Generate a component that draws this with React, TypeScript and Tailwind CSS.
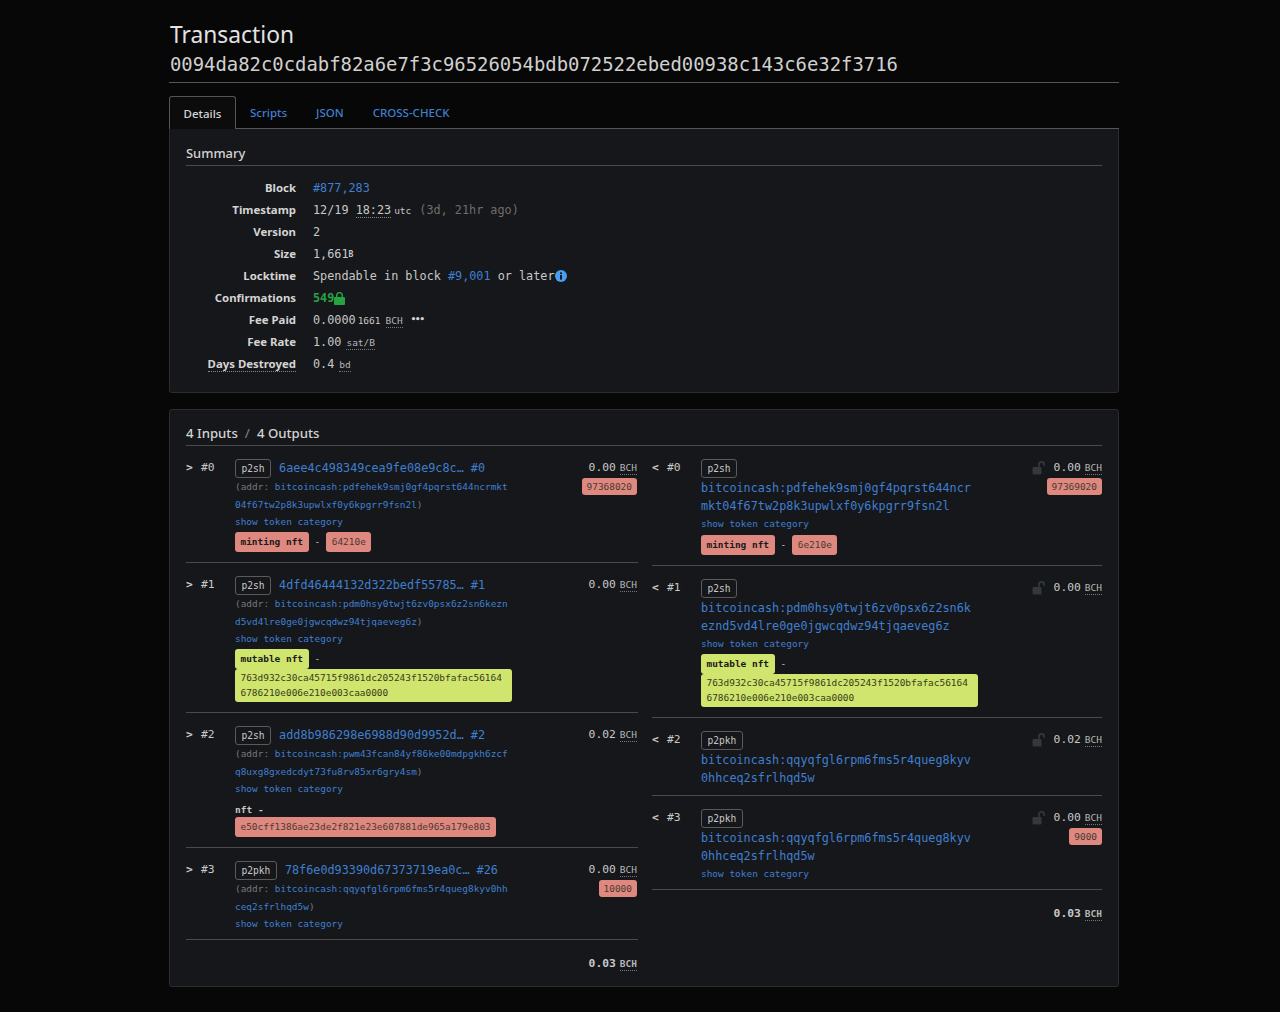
import React from "react";

const mono = "font-['DejaVu_Sans_Mono',monospace]";
const sans = "font-['Noto_Sans',sans-serif]";
const link = "text-[#3f7fd0]";

function Unit({ children, cls = "" }: { children: React.ReactNode; cls?: string }) {
  return <span className={`text-[9.5px] leading-[12px] border-b border-dotted border-[#777] text-[#b5b5b5] ${cls}`}>{children}</span>;
}

function Row({ label, dotted, children }: { label: string; dotted?: boolean; children: React.ReactNode }) {
  return (
    <div className="flex h-[22px] items-center">
      <div className="w-[110px] pb-[2px] text-right text-[11.4px] font-bold text-[#d4d4d4]">
        <span className={dotted ? "border-b border-dotted border-[#888]" : ""}>{label}</span>
      </div>
      <div className={`ml-[17px] flex items-center text-[11.8px] text-[#c8c8c8] ${mono}`}>{children}</div>
    </div>
  );
}

function Amount({ value, bold }: { value: string; bold?: boolean }) {
  return (
    <span className={`flex items-center gap-[4px] text-[11.3px] text-[#c8c8c8] ${mono} ${bold ? "font-bold" : ""}`}>
      {value} <Unit>BCH</Unit>
    </span>
  );
}

function Pill({ children, color, bold }: { children: React.ReactNode; color: "red" | "green"; bold?: boolean }) {
  const c = color === "red" ? "bg-[#de8880]" : "bg-[#cfe56d]";
  return (
    <span className={`block w-fit rounded-[3px] px-[5.5px] text-[9.45px] leading-[20px] ${c} ${bold ? "font-bold text-[#1a1a1a]" : "text-[#4a3a30]"}`}>
      {children}
    </span>
  );
}

function Sats({ children }: { children: React.ReactNode }) {
  return <span className="block w-fit rounded-[3px] bg-[#de8880] px-[5px] text-[9.45px] leading-[17px] text-[#4a3a30]">{children}</span>;
}

function Kind({ children }: { children: string }) {
  return (
    <span className={`block h-[19px] w-fit shrink-0 rounded-[3px] border border-[#5a5a5a] px-[5.5px] text-[9.6px] leading-[17px] text-[#c8c8c8] ${mono}`}>
      {children}
    </span>
  );
}

function LockOpen() {
  return (
    <svg width="14" height="14" viewBox="0 0 14 14" className="mb-[1px] mr-[8px]">
      <rect x="0.5" y="6" width="9" height="7.5" rx="1" fill="#34373b" />
      <path d="M7 6V3.4a2.5 2.5 0 0 1 5 0V5" fill="none" stroke="#34373b" strokeWidth="1.6" />
    </svg>
  );
}

type Token =
  | { kind: "split"; name: string; value: string }
  | { kind: "stack"; name: string; value: string }
  | { kind: "plain"; value: string };

function TokenLine({ t, output }: { t: Token; output?: boolean }) {
  if (t.kind === "split")
    return (
      <div className={`flex items-center gap-[6px] text-[#c8c8c8] ${output ? "mt-[2px]" : "mt-[1px]"}`}>
        <Pill color="red" bold>{t.name}</Pill>
        <span className="text-[9.5px]">-</span>
        <Pill color="red">{t.value}</Pill>
      </div>
    );
  if (t.kind === "stack")
    return (
      <div className="mt-[1px] text-[#c8c8c8]">
        <div className="flex items-center gap-[6px]">
          <Pill color="green" bold>{t.name}</Pill>
          <span className="text-[9.5px]">-</span>
        </div>
        <div className="w-[277px] rounded-[3px] bg-[#cfe56d] px-[5.5px] py-[2px] text-[9.45px] leading-[14.5px] text-[#3a3a20]">
          {t.value}
        </div>
      </div>
    );
  return (
    <div className="mt-[5px] text-[#c8c8c8]">
      <div className="h-[14px] text-[9.5px] font-bold leading-[14px]">nft -</div>
      <Pill color="red">{t.value}</Pill>
    </div>
  );
}

function Input({ n, kind, tx, out, a1, a2, amount, sats, showCat = true, token, last }: {
  n: string; kind: string; tx: string; out: string; a1: string; a2: string; amount: string; sats?: string; showCat?: boolean; token?: Token; last?: boolean;
}) {
  return (
    <div className={`flex border-b border-[#4a4a4a] pt-[13px] ${mono} ${last ? "pb-[6px]" : "pb-[10px]"}`}>
      <div className="flex h-[19px] w-[49px] shrink-0 items-center text-[11.3px] text-[#c8c8c8]">
        <span className="w-[15px] font-bold">&gt;</span>#{n}
      </div>
      <div className="min-w-0 flex-1">
        <div className="flex h-[19px] items-center">
          <Kind>{kind}</Kind>
          <span className={`ml-[8px] text-[11.8px] ${link}`}>{tx}</span>
          <span className={`ml-[7px] text-[11.8px] ${link}`}>#{out}</span>
        </div>
        <div className="text-[9.45px] leading-[18px] text-[#777]">
          (addr: <span className={link}>{a1}</span>
          <br />
          <span className={link}>{a2}</span>)
        </div>
        {showCat && <div className={`-mt-[1px] text-[9.45px] leading-[18px] ${link}`}>show token category</div>}
        {token && <TokenLine t={token} />}
      </div>
      <div className="flex shrink-0 flex-col items-end pr-[1px]">
        <div className="flex h-[19px] items-center"><Amount value={amount} /></div>
        {sats && <Sats>{sats}</Sats>}
      </div>
    </div>
  );
}

function Output({ n, kind, a1, a2, amount, sats, showCat = true, token }: {
  n: string; kind: string; a1: string; a2: string; amount: string; sats?: string; showCat?: boolean; token?: Token;
}) {
  const pb = token ? "pb-[10px]" : showCat ? "pb-[6px]" : "pb-[8px]";
  return (
    <div className={`flex border-b border-[#4a4a4a] pt-[13px] ${pb} ${mono}`}>
      <div className="flex h-[19px] w-[49px] shrink-0 items-center text-[11.3px] text-[#c8c8c8]">
        <span className="w-[15px] font-bold">&lt;</span>#{n}
      </div>
      <div className="min-w-0 flex-1">
        <Kind>{kind}</Kind>
        <div className={`mt-[1px] text-[11.8px] leading-[18px] ${link}`}>
          {a1}
          <br />
          {a2}
        </div>
        {showCat && <div className={`text-[9.45px] leading-[18px] ${link}`}>show token category</div>}
        {token && <TokenLine t={token} output />}
      </div>
      <div className="flex shrink-0 flex-col items-end">
        <div className="flex h-[19px] items-center"><LockOpen /><Amount value={amount} /></div>
        {sats && <Sats>{sats}</Sats>}
      </div>
    </div>
  );
}

const tokenHash = "763d932c30ca45715f9861dc205243f1520bfafac56164 6786210e006e210e003caa0000";

export default function App() {
  return (
    <div className={`min-h-[1012px] bg-[#070707] pt-[21px] text-[#d4d4d4] ${sans}`}>
      <div className="ml-[169px] w-[950px]">
        <h1 className="pl-[1px] text-[22.8px] leading-[28px] text-[#e2e2e2]">Transaction</h1>
        <div className={`mt-[2px] border-b border-[#555] pb-[5px] pl-[1px] text-[18.9px] leading-[26px] text-[#d0d0d0] ${mono}`}>
          0094da82c0cdabf82a6e7f3c96526054bdb072522ebed00938c143c6e32f3716
        </div>

        <div className="mt-[13px] flex h-[33px] border-b border-[#555] text-[11.5px] font-medium">
          <div className="flex h-[33px] w-[67px] items-center justify-center rounded-t-[3px] border border-b-0 border-[#555] bg-[#0c0c0d] pt-[1px] text-[#d4d4d4]">Details</div>
          <div className={`ml-[14px] flex items-center pt-[1px] ${link}`}>Scripts</div>
          <div className={`ml-[29px] flex items-center pt-[1px] ${link}`}>JSON</div>
          <div className={`ml-[29px] flex items-center pt-[1px] ${link}`}>CROSS-CHECK</div>
        </div>

        <section className="h-[264px] rounded-b-[3px] border border-t-0 border-[#2c2c2e] bg-[#16171a] px-[16px] pt-[14px]">
          <h2 className="border-b border-[#4a4a4a] pb-[2px] text-[12.9px] font-medium leading-[20px] text-[#d4d4d4]">Summary</h2>
          <div className="mt-[12px]">
            <Row label="Block"><span className={link}>#877,283</span></Row>
            <Row label="Timestamp">
              12/19&nbsp;<span className="border-b border-dotted border-[#888] leading-[13px]">18:23</span>
              <span className="ml-[3px] text-[9.5px]">utc</span>
              <span className="ml-[8px] text-[#6e6e6e]">(3d, 21hr ago)</span>
            </Row>
            <Row label="Version">2</Row>
            <Row label="Size">1,661<span className="text-[8px] font-bold">B</span></Row>
            <Row label="Locktime">
              Spendable in block&nbsp;<span className={link}>#9,001</span>&nbsp;or later
              <svg width="12" height="12" viewBox="0 0 12 12" className="mb-[2px]">
                <circle cx="6" cy="6" r="6" fill="#4a9cf0" />
                <rect x="5" y="5" width="2" height="4.6" fill="#16171a" />
                <rect x="5" y="2.4" width="2" height="1.7" fill="#16171a" />
              </svg>
            </Row>
            <Row label="Confirmations">
              <span className="font-bold text-[#27a243]">549</span>
              <svg width="11" height="13" viewBox="0 0 11 13" className="mb-[2px]">
                <rect x="0" y="5" width="11" height="8" rx="1" fill="#27a243" />
                <path d="M2.7 6V3.4a2.8 2.8 0 0 1 5.6 0V6" fill="none" stroke="#27a243" strokeWidth="1.5" />
              </svg>
            </Row>
            <Row label="Fee Paid">
              0.0000<span className="ml-[2px] text-[9.5px]">1661</span>
              <Unit cls="ml-[5px]">BCH</Unit>
              <span className="ml-[8px] mb-[3px] text-[9px] font-bold tracking-[-1px] text-[#d4d4d4]">•••</span>
            </Row>
            <Row label="Fee Rate">1.00<Unit cls="ml-[5px]">sat/B</Unit></Row>
            <Row label="Days Destroyed" dotted>0.4<Unit cls="ml-[5px]">bd</Unit></Row>
          </div>
        </section>

        <section className="mt-[16px] h-[578px] rounded-[3px] border border-[#2c2c2e] bg-[#16171a] px-[16px] pt-[13px]">
          <h2 className="flex gap-[7px] border-b border-[#4a4a4a] pb-[2px] text-[13.2px] font-medium leading-[20px] text-[#d4d4d4]">
            <span>4 Inputs</span><span className="text-[#777]">/</span><span>4 Outputs</span>
          </h2>
          <div className="flex gap-[14px]">
            <div className="w-[452px]">
              <Input n="0" kind="p2sh" tx="6aee4c498349cea9fe08e9c8c…" out="0" a1="bitcoincash:pdfehek9smj0gf4pqrst644ncrmkt" a2="04f67tw2p8k3upwlxf0y6kpgrr9fsn2l" amount="0.00" sats="97368020" token={{ kind: "split", name: "minting nft", value: "64210e" }} />
              <Input n="1" kind="p2sh" tx="4dfd46444132d322bedf55785…" out="1" a1="bitcoincash:pdm0hsy0twjt6zv0psx6z2sn6kezn" a2="d5vd4lre0ge0jgwcqdwz94tjqaeveg6z" amount="0.00" token={{ kind: "stack", name: "mutable nft", value: tokenHash }} />
              <Input n="2" kind="p2sh" tx="add8b986298e6988d90d9952d…" out="2" a1="bitcoincash:pwm43fcan84yf86ke00mdpgkh6zcf" a2="q8uxg8gxedcdyt73fu8rv85xr6gry4sm" amount="0.02" token={{ kind: "plain", value: "e50cff1386ae23de2f821e23e607881de965a179e803" }} />
              <Input n="3" kind="p2pkh" tx="78f6e0d93390d67373719ea0c…" out="26" a1="bitcoincash:qqyqfgl6rpm6fms5r4queg8kyv0hh" a2="ceq2sfrlhqd5w" amount="0.00" sats="10000" last />
              <div className="flex justify-end pr-[1px] pt-[16px]"><Amount value="0.03" bold /></div>
            </div>
            <div className="w-[450px]">
              <Output n="0" kind="p2sh" a1="bitcoincash:pdfehek9smj0gf4pqrst644ncr" a2="mkt04f67tw2p8k3upwlxf0y6kpgrr9fsn2l" amount="0.00" sats="97369020" token={{ kind: "split", name: "minting nft", value: "6e210e" }} />
              <Output n="1" kind="p2sh" a1="bitcoincash:pdm0hsy0twjt6zv0psx6z2sn6k" a2="eznd5vd4lre0ge0jgwcqdwz94tjqaeveg6z" amount="0.00" token={{ kind: "stack", name: "mutable nft", value: tokenHash }} />
              <Output n="2" kind="p2pkh" a1="bitcoincash:qqyqfgl6rpm6fms5r4queg8kyv" a2="0hhceq2sfrlhqd5w" amount="0.02" showCat={false} />
              <Output n="3" kind="p2pkh" a1="bitcoincash:qqyqfgl6rpm6fms5r4queg8kyv" a2="0hhceq2sfrlhqd5w" amount="0.00" sats="9000" />
              <div className="flex justify-end pt-[16px]"><Amount value="0.03" bold /></div>
            </div>
          </div>
        </section>
      </div>
    </div>
  );
}
